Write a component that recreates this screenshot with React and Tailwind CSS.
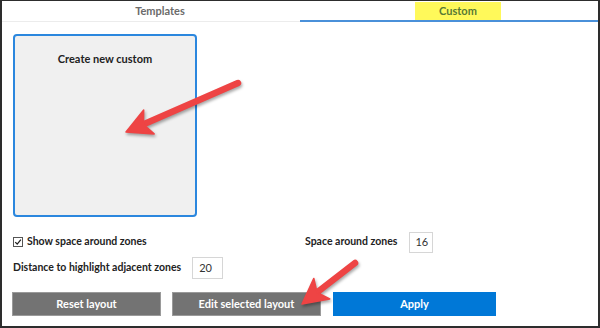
import React from 'react';

// red annotation arrow, drawn from tail to tip
const Arrow = ({ x1, y1, x2, y2 }) => {
    const dx = x2 - x1;
    const dy = y2 - y1;
    const len = Math.hypot(dx, dy);
    const ux = dx / len;
    const uy = dy / len;
    const px = -uy;
    const py = ux;
    const headLen = 25;
    const headW = 13;
    const bx = x2 - ux * headLen;
    const by = y2 - uy * headLen;
    const head = [
        [x2, y2],
        [bx + px * headW, by + py * headW],
        [bx + ux * 6, by + uy * 6],
        [bx - px * headW, by - py * headW],
    ].map((p) => p.join(',')).join(' ');
    return (
        <g>
            <line x1={x1} y1={y1} x2={bx + ux * 7} y2={by + uy * 7} stroke="#ee4444" strokeWidth="6.5" strokeLinecap="round" />
            <polygon points={head} fill="#ee4444" strokeLinejoin="round" stroke="#ee4444" strokeWidth="1.5" />
        </g>
    );
};

const App = () => {
    return (
        <div className="relative w-[600px] h-[328px] bg-white border-l-2 border-r-2 border-b-2 border-t border-[#2d2d2d] font-['Lato','Open_Sans',sans-serif] text-[10.5px] font-bold text-[#222] overflow-hidden">
            {/* Tabs */}
            <div className="flex h-[21px] text-[11px]">
                <div className="w-[298px] flex items-center justify-center pl-[18px] border-b border-[#ececec] text-[#6b6b6b]">
                    Templates
                </div>
                <div className="flex-1 flex justify-center pl-[18px] border-b-2 border-[#4a90d9]">
                    <span className="w-[86px] h-[18px] mt-px bg-[#fff95a] flex items-center justify-center text-[#587a35]">Custom</span>
                </div>
            </div>

            {/* Layout card */}
            <div className="pl-[11px] pt-[12px]">
                <div className="w-[184px] h-[183px] bg-[#f0f0f0] border-2 border-[#2b87de] rounded-[4px] flex justify-center pt-[16px] text-[11px]">
                    <span className="h-[14px] leading-[14px]">Create new custom</span>
                </div>
            </div>

            {/* Settings */}
            <div className="pl-[10px] mt-[15px]">
                <div className="flex items-center h-[20px]">
                    <label className="w-[293px] flex items-center gap-[4px] pl-[1px]">
                        <span className="w-[10px] h-[10px] border border-[#555] bg-white flex items-center justify-center">
                            <svg viewBox="0 0 10 10" className="w-[8px] h-[8px]">
                                <path d="M1.5 5.2 L4 7.6 L8.6 2" fill="none" stroke="#222" strokeWidth="1.6" />
                            </svg>
                        </span>
                        Show space around zones
                    </label>
                    <span>Space around zones</span>
                    <div className="ml-[12px] w-[24px] h-[21px] border border-[#d6d6d6] flex items-center pl-[5px] font-normal text-[11px] text-[#333]">16</div>
                </div>
                <div className="flex items-center h-[22px] mt-[5px] pl-[1px]">
                    <span>Distance to highlight adjacent zones</span>
                    <div className="ml-[11px] w-[31px] h-[22px] border border-[#d6d6d6] flex items-center pl-[6px] font-normal text-[11px] text-[#333]">20</div>
                </div>
                <div className="flex mt-[13px] text-white text-[11px]">
                    <button className="w-[149px] h-[24px] bg-[#737373] border border-[#9a9a9a]">Reset layout</button>
                    <button className="ml-[11px] w-[149px] h-[24px] bg-[#737373] border border-[#9a9a9a]">Edit selected layout</button>
                    <button className="ml-[12px] w-[163px] h-[24px] bg-[#0078d7]">Apply</button>
                </div>
            </div>

            {/* annotations */}
            <svg className="absolute left-0 top-0 w-[600px] h-[328px] pointer-events-none" style={{ filter: 'drop-shadow(1px 2px 1.5px rgba(0,0,0,0.35))' }}>
                <Arrow x1={236} y1={82} x2={124} y2={131} />
                <Arrow x1={353} y1={262} x2={300} y2={303} />
            </svg>
        </div>
    );
};

export default App;
